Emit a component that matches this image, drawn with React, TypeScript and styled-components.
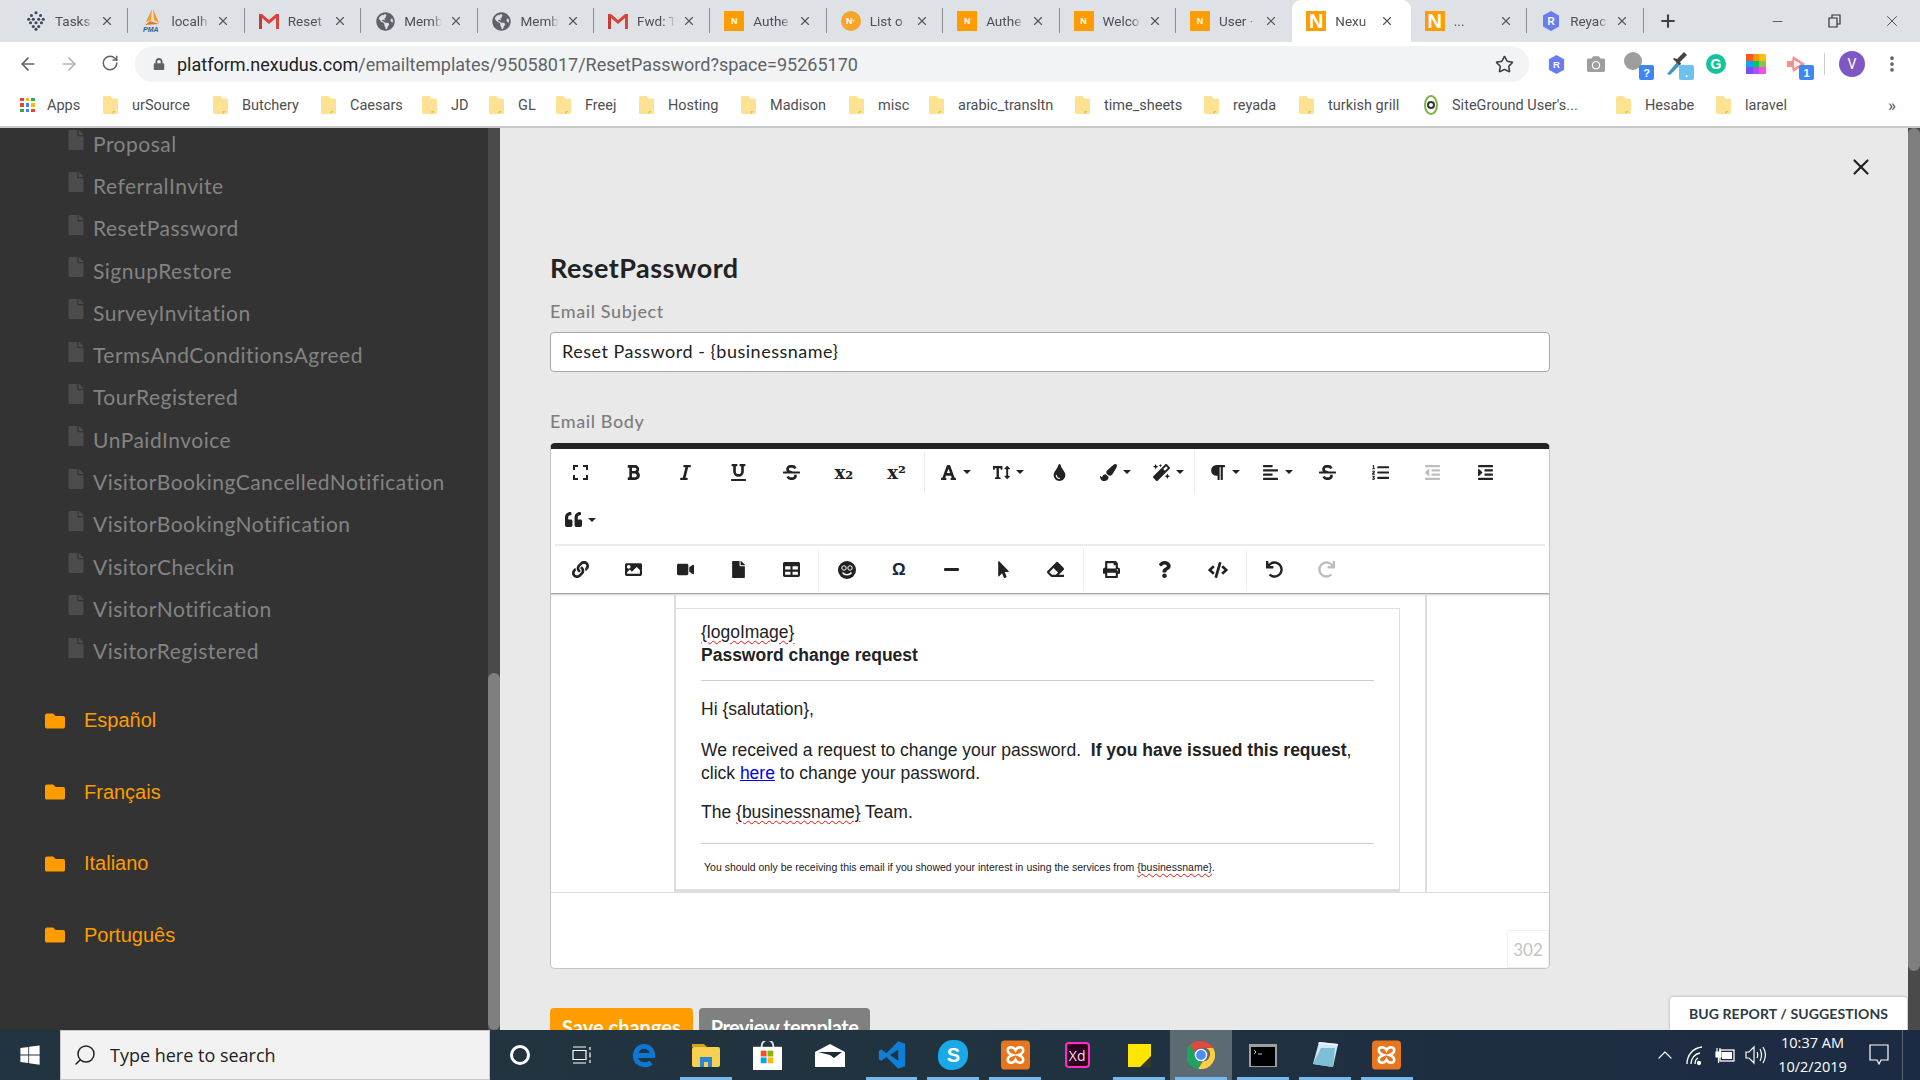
import React from 'react';
import styled, { createGlobalStyle } from 'styled-components';
import { ArrowLeft, ArrowRight, RotateCw, Star, X, Minus, Plus, Search, ChevronUp, MoreVertical } from 'lucide-react';
import {
  FaBold, FaItalic, FaUnderline, FaStrikethrough, FaFont, FaTextHeight, FaTint,
  FaPaintBrush, FaMagic, FaParagraph, FaAlignLeft, FaListOl, FaOutdent, FaIndent, FaQuoteLeft, FaLink, FaImage,
  FaVideo, FaFile, FaTable, FaMinus, FaMousePointer, FaEraser, FaPrint, FaQuestion, FaCode, FaUndo, FaRedo,
  FaLock, FaGlobeAmericas, FaWindows, FaFolder, FaCamera,
} from 'react-icons/fa';

const GlobalStyle = createGlobalStyle`
  html, body {
    margin: 0;
    height: 100%;
    overflow: hidden;
    font-family: "Liberation Sans", Arial, sans-serif;
  }
  * { box-sizing: border-box; }
`;

const Screen = styled.div`
  width: 1920px;
  height: 1080px;
  display: flex;
  flex-direction: column;
  overflow: hidden;
`;

/* browser chrome */
const TabStrip = styled.div`
  height: 42px;
  background: #dee1e6;
  display: flex;
  align-items: stretch;
  padding-left: 12px;
  flex: none;
`;

const Tab = styled.div<{ $active?: boolean; $sep?: boolean }>`
  position: relative;
  width: ${p => (p.$active ? 118.5 : 116.4)}px;
  display: flex;
  align-items: center;
  padding-left: 14px;
  font-family: Roboto, sans-serif;
  font-size: 13.5px;
  color: #4d5054;
  background: ${p => (p.$active ? '#fff' : 'transparent')};
  border-radius: ${p => (p.$active ? '9px 9px 0 0' : '0')};

  &::after {
    content: '';
    position: absolute;
    right: 0;
    top: 8px;
    bottom: 9px;
    width: 1px;
    background: ${p => (p.$sep ? '#8a8d91' : 'transparent')};
  }
`;

const TabIcon = styled.div`
  width: 20px;
  height: 20px;
  flex: none;
  display: flex;
  align-items: center;
  justify-content: center;
`;

const TabTitle = styled.div`
  width: 38px;
  margin-left: 9px;
  white-space: nowrap;
  overflow: hidden;
  -webkit-mask-image: linear-gradient(90deg, #000 75%, transparent);
  mask-image: linear-gradient(90deg, #000 75%, transparent);
`;

const TabClose = styled.div`
  margin-left: 7px;
  display: flex;
  color: #55585c;
`;

const NFav = styled.div<{ $big?: boolean }>`
  width: 20px;
  height: 20px;
  background: #ff9c00;
  color: #fff;
  font-family: "Liberation Sans", sans-serif;
  font-weight: 700;
  font-size: ${p => (p.$big ? 20 : 9)}px;
  display: flex;
  align-items: center;
  justify-content: center;
`;

const NRound = styled(NFav)`
  border-radius: 50%;
  background: #f4a62a;
  font-size: 9px;
`;

const NewTab = styled.div`
  width: 49px;
  display: flex;
  align-items: center;
  justify-content: center;
  color: #3c4043;
`;

const WinControls = styled.div`
  margin-left: auto;
  display: flex;
  align-items: center;
  color: #333;
`;

const WinButton = styled.div`
  width: 57px;
  display: flex;
  justify-content: center;
`;

const AddressRow = styled.div`
  height: 42px;
  padding-top: 2px;
  background: #fff;
  display: flex;
  align-items: center;
  flex: none;
`;

const NavButton = styled.div<{ $muted?: boolean }>`
  width: 41px;
  display: flex;
  justify-content: center;
  color: ${p => (p.$muted ? '#b4b6b9' : '#5f6368')};
`;

const NavGroup = styled.div`
  width: 135px;
  padding-left: 7px;
  display: flex;
`;

const UrlBar = styled.div`
  width: 1394px;
  height: 36px;
  border-radius: 18px;
  background: #f1f3f4;
  display: flex;
  align-items: center;
  padding-left: 18px;
  padding-right: 15px;
  font-family: Roboto, sans-serif;
  font-size: 18px;
  color: #5f6368;
  white-space: nowrap;
`;

const UrlHost = styled.span`
  color: #202124;
  margin-left: 12px;
`;

const UrlStar = styled.div`
  margin-left: auto;
  display: flex;
  color: #3c4043;
`;

const Extensions = styled.div`
  flex: 1;
  display: flex;
  align-items: center;
  padding-left: 7px;
`;

const Ext = styled.div`
  position: relative;
  width: 40px;
  height: 30px;
  display: flex;
  align-items: center;
  justify-content: center;
`;

const ExtBadge = styled.div<{ $light?: boolean }>`
  position: absolute;
  right: 2px;
  bottom: -1px;
  width: 15px;
  height: 15px;
  border-radius: 2px;
  background: ${p => (p.$light ? '#6ec1ec' : '#3d87f5')};
  color: #fff;
  font-family: "Liberation Sans", sans-serif;
  font-weight: 700;
  font-size: 11px;
  display: flex;
  align-items: center;
  justify-content: center;
`;

const GrayBall = styled.div`
  width: 18px;
  height: 18px;
  border-radius: 50%;
  background: #9e9e9e;
  margin: -6px 6px 0 0;
`;

const GrammarlyBall = styled.div`
  width: 20px;
  height: 20px;
  border-radius: 50%;
  background: #15c39a;
  color: #fff;
  font-family: "Liberation Sans", sans-serif;
  font-weight: 700;
  font-size: 14px;
  display: flex;
  align-items: center;
  justify-content: center;
`;

const ToolbarRule = styled.div`
  width: 1px;
  height: 22px;
  background: #c9cacc;
  margin: 0 14px 0 8px;
`;

const Avatar = styled.div`
  width: 26px;
  height: 26px;
  border-radius: 50%;
  background: #7e57c2;
  color: #fff;
  font-family: Roboto, sans-serif;
  font-size: 14px;
  display: flex;
  align-items: center;
  justify-content: center;
`;

const Dots = styled.div`
  margin-left: 17px;
  color: #5f6368;
  display: flex;
`;

const BookmarkRow = styled.div`
  height: 44px;
  background: #fff;
  border-bottom: 2px solid #c7c7c7;
  display: flex;
  align-items: center;
  padding-left: 20px;
  font-family: Roboto, sans-serif;
  font-size: 14.5px;
  color: #4d4f52;
  flex: none;
`;

const Bookmark = styled.div<{ $w: number; $gap?: number }>`
  width: ${p => p.$w}px;
  flex: none;
  display: flex;
  align-items: center;
  gap: ${p => p.$gap ?? 14}px;
  white-space: nowrap;
`;

const More = styled.div`
  margin-left: auto;
  padding-right: 24px;
  font-size: 17px;
`;

const AppsGrid = styled.div`
  width: 15px;
  height: 15px;
  display: grid;
  grid-template-columns: repeat(3, 3.6px);
  grid-auto-rows: 3.6px;
  gap: 2px;
  margin-right: 12px;
`;

const AppDot = styled.div<{ $c: string }>`
  background: ${p => p.$c};
`;

/* page */
const PageRow = styled.div`
  flex: 1;
  min-height: 0;
  display: flex;
`;

const Sidebar = styled.aside`
  width: 488px;
  flex: none;
  background: #333;
  overflow: hidden;
`;

const FileList = styled.div`
  margin-top: -6px;
  padding-left: 68px;
`;

const FileRow = styled.div`
  height: 42.3px;
  display: flex;
  align-items: center;
  gap: 9px;
  font-family: Lato, sans-serif;
  font-size: 21px;
  letter-spacing: 0.5px;
  color: #838383;
  white-space: nowrap;
`;

const FileGlyph = styled(FaFile)`
  color: #4c4c4c;
  width: 16px;
  height: 20px;
  margin-top: -6px;
  flex: none;
`;

const LangList = styled.div`
  margin-top: 13px;
  padding-left: 45px;
`;

const LangRow = styled.div`
  height: 71.6px;
  display: flex;
  align-items: center;
  gap: 19px;
  font-size: 20px;
  color: #ff9c00;
`;

const Scrollbar = styled.div<{ $top: number; $bottom: number }>`
  width: 12px;
  flex: none;
  background: #4a4a4a;
  display: flex;
  flex-direction: column;
  padding-top: ${p => p.$top}px;
  padding-bottom: ${p => p.$bottom}px;
`;

const ScrollThumb = styled.div`
  flex: 1;
  background: #7f7f7f;
  border-radius: 6px;
`;

const Main = styled.main`
  flex: 1;
  position: relative;
  background: #e9e9e9;
  padding: 125px 0 0 50px;
  overflow: hidden;
`;

const CloseMark = styled.div`
  position: absolute;
  top: 26px;
  right: 34px;
  color: #222;
  display: flex;
`;

const Form = styled.div`
  width: 1000px;
`;

const Title = styled.h1`
  margin: 0;
  height: 30px;
  line-height: 30px;
  font-family: Lato, sans-serif;
  font-weight: 700;
  font-size: 27px;
  letter-spacing: 0.45px;
  color: #222;
`;

const Label = styled.div`
  margin-top: 16px;
  height: 24px;
  line-height: 24px;
  font-family: Lato, sans-serif;
  font-size: 18px;
  letter-spacing: 0.6px;
  color: #7d7d7d;
  font-weight: 500;
`;

const SubjectInput = styled.div`
  margin-top: 9px;
  height: 40px;
  background: #fff;
  border: 1px solid #aaa;
  border-radius: 4px;
  padding: 0 11px 3px;
  display: flex;
  align-items: center;
  font-family: Lato, sans-serif;
  font-size: 18px;
  letter-spacing: 0.5px;
  color: #222;
`;

const BodyLabel = styled(Label)`
  margin-top: 37px;
`;

const Editor = styled.div`
  margin-top: 10px;
  height: 526px;
  background: #fff;
  border: 1px solid #c4c4c4;
  border-top: 6px solid #222;
  border-radius: 5px;
  display: flex;
  flex-direction: column;
  overflow: hidden;
`;

const ToolRow = styled.div<{ $h: number }>`
  height: ${p => p.$h}px;
  display: flex;
  align-items: center;
  padding-left: 3px;
  flex: none;
`;

const ToolBtn = styled.div<{ $w?: number; $muted?: boolean }>`
  width: ${p => p.$w ?? 52.7}px;
  flex: none;
  display: flex;
  align-items: center;
  justify-content: center;
  color: ${p => (p.$muted ? '#bdbdbd' : '#222')};
  font-size: 17px;
`;

const DropBtn = styled(ToolBtn)`
  padding-left: 5px;
`;

const Caret = styled.span`
  width: 0;
  height: 0;
  margin-left: 6px;
  border-left: 4px solid transparent;
  border-right: 4px solid transparent;
  border-top: 4px solid #222;
`;

const ToolSep = styled.div`
  width: 1px;
  height: 42px;
  background: #ececec;
  flex: none;
  margin: 0 1px;
`;

const ToolDivider = styled.div`
  height: 2px;
  margin: 0 4px;
  background: #ebebeb;
  flex: none;
`;

const OmegaGlyph = styled.span`
  font-family: "Liberation Sans", sans-serif;
  font-weight: 700;
  font-size: 17px;
  color: #1a2440;
`;

const ScriptGlyph = styled.span`
  font-family: "DejaVu Serif", serif;
  font-weight: 700;
  font-size: 18px;
  color: #222;
`;

const EditorBody = styled.div`
  height: 299px;
  flex: none;
  border-top: 1px solid #a8a8a8;
  box-shadow: inset 0 2px 2px -1px #ccc;
  padding-left: 123px;
  overflow: hidden;
`;

const EmailFrame = styled.div`
  width: 753px;
  height: 100%;
  padding-top: 13px;
  border: solid #ddd;
  border-width: 1px 2px 0 2px;
`;

const EmailCard = styled.div`
  width: 724px;
  height: 100%;
  border: 1px solid #ddd;
  border-left: 0;
  border-bottom: 3px solid #ddd;
  padding: 12px 25px 0 25px;
  font-size: 17.5px;
  line-height: 23px;
  color: #222;
`;

const Squiggle = styled.span`
  text-decoration: underline wavy #e81010 1px;
  text-underline-offset: 2px;
`;

const EmailRule = styled.hr<{ $top: number }>`
  border: 0;
  border-top: 1px solid #ccc;
  margin: ${p => p.$top}px 0 0 0;
`;

const EmailPara = styled.p<{ $top: number }>`
  margin: ${p => p.$top}px 0 0 0;
`;

const EmailLink = styled.a`
  color: #0000ee;
  text-decoration: underline;
`;

const SmallPrint = styled.p`
  margin: 15px 0 0 3px;
  font-size: 10.5px;
  line-height: 16px;
  white-space: nowrap;
`;

const EditorFoot = styled.div`
  flex: 1;
  position: relative;
  border-top: 1px solid #ddd;
`;

const Counter = styled.div`
  position: absolute;
  right: 0;
  bottom: 0;
  width: 42px;
  height: 38px;
  border: 1px solid #eee;
  border-radius: 3px 0 0 0;
  color: #c4c4c4;
  font-family: Lato, sans-serif;
  font-size: 17px;
  display: flex;
  align-items: center;
  justify-content: center;
`;

const Actions = styled.div`
  margin-top: 39px;
  display: flex;
  gap: 6px;
`;

const ActionButton = styled.button<{ $gray?: boolean }>`
  height: 38px;
  padding: 0 12px;
  border: 0;
  border-radius: 4px;
  background: ${p => (p.$gray ? '#808080' : '#ff9c00')};
  color: #fff;
  font-family: Lato, sans-serif;
  font-weight: 700;
  font-size: 20px;
  letter-spacing: ${p => (p.$gray ? '-0.5px' : '0')};
`;

const Feedback = styled.div`
  position: absolute;
  right: 1px;
  bottom: 0;
  width: 237px;
  height: 33px;
  background: #fff;
  border-radius: 3px 3px 0 0;
  box-shadow: 0 0 3px rgba(0, 0, 0, 0.3);
  display: flex;
  align-items: center;
  justify-content: center;
  font-family: Lato, sans-serif;
  font-weight: 700;
  font-size: 14px;
  letter-spacing: 0.1px;
  color: #2d3a45;
`;

/* taskbar */
const Taskbar = styled.footer`
  height: 50px;
  flex: none;
  background: linear-gradient(90deg, #22343f 0%, #21333f 50%, #1c2a44 100%);
  display: flex;
  align-items: stretch;
  color: #fff;
`;

const StartButton = styled.div`
  width: 60px;
  display: flex;
  align-items: center;
  justify-content: center;
  flex: none;
`;

const SearchBox = styled.div`
  width: 430px;
  flex: none;
  background: #f2f2f2;
  border: 1px solid #c8c8c8;
  display: flex;
  align-items: center;
  padding-left: 12px;
  gap: 13px;
  font-family: "Open Sans", sans-serif;
  font-size: 18px;
  color: #222;
`;

const FlippedSearch = styled(Search)`
  transform: scaleX(-1);
`;

const TaskSlot = styled.div<{ $w?: number; $open?: boolean; $active?: boolean }>`
  position: relative;
  width: ${p => p.$w ?? 61.9}px;
  flex: none;
  display: flex;
  align-items: center;
  justify-content: center;
  background: ${p => (p.$active ? '#5b6a73' : 'transparent')};

  &::after {
    content: '';
    position: absolute;
    left: 5px;
    right: 5px;
    bottom: 0;
    height: 3px;
    background: ${p => (p.$open ? '#76b9ed' : 'transparent')};
  }
`;

const CortanaRing = styled.div`
  width: 20px;
  height: 20px;
  border: 3px solid #fff;
  border-radius: 50%;
`;

const SkypeTile = styled.div`
  width: 30px;
  height: 30px;
  border-radius: 50% 42% 50% 42%;
  background: #19a8e8;
  color: #fff;
  font-weight: 700;
  font-size: 20px;
  display: flex;
  align-items: center;
  justify-content: center;
`;

const XdTile = styled.div`
  width: 25px;
  height: 26px;
  border: 2px solid #ff2bc2;
  border-radius: 4px;
  background: #2e001f;
  color: #ffd9f2;
  font-family: "Open Sans", sans-serif;
  font-size: 14px;
  display: flex;
  align-items: center;
  justify-content: center;
`;

const Tray = styled.div`
  margin-left: auto;
  width: 270px;
  display: flex;
  align-items: center;
  flex: none;
`;

const TrayIcon = styled.div<{ $w: number }>`
  width: ${p => p.$w}px;
  flex: none;
  display: flex;
  justify-content: center;
`;

const Clock = styled.div`
  width: 85px;
  flex: none;
  text-align: center;
  font-family: "Open Sans", sans-serif;
  font-size: 14.5px;
  line-height: 24px;
  color: #fff;
`;

const ShowDesktop = styled.div`
  width: 18px;
  height: 100%;
  border-left: 1px solid #5a6676;
`;

const Gmail = () => (
  <svg width="20" height="16" viewBox="0 0 20 16">
    <path d="M0 1h3l7 6 7-6h3v15h-3V5l-7 6-7-6v11H0z" fill="#d9453a" />
    <path d="M3 5v11H0V1z" fill="#c63b32" />
  </svg>
);

const Hive = () => (
  <svg width="22" height="22" viewBox="0 0 22 22" fill="#3a4a5c">
    {[[11, 2], [6, 5], [16, 5], [3, 9], [8, 9], [14, 9], [19, 9], [5, 13], [11, 13], [17, 13], [8, 17], [14, 17], [11, 20]].map(([x, y]) => (
      <circle key={`${x}-${y}`} cx={x} cy={y} r="1.7" />
    ))}
  </svg>
);

const Pma = () => (
  <svg width="20" height="24" viewBox="0 0 20 24">
    <path d="M10 0 4 13l5-2zM11 0l1 11 5 3z" fill="#f39a2b" />
    <path d="M3 16 8 12l3 1 6 2z" fill="#e67a1f" />
    <text x="1" y="23" fontSize="7" fontWeight="700" fontStyle="italic" fill="#2f5f9a" fontFamily="Liberation Sans">PMA</text>
  </svg>
);

const Hex = ({ size = 20 }: { size?: number }) => (
  <svg width={size} height={size} viewBox="0 0 20 20">
    <path d="M10 0 18 4.5v11L10 20 2 15.5v-11z" fill="#6b7bf0" />
    <text x="10" y="14" textAnchor="middle" fontSize="10" fontWeight="700" fill="#fff" fontFamily="Liberation Sans">R</text>
  </svg>
);

const BookmarkFolder = () => (
  <svg width="15" height="18" viewBox="0 0 15 18">
    <path d="M1.5 0h6l2 2.5h4A1.5 1.5 0 0 1 15 4v12.500a1.500 1.500 0 0 1-1.500 1.500h-12A1.500 1.500 0 0 1 0 16.500v-15A1.500 1.500 0 0 1 1.500 0z" fill="#fde293" />
    <path d="M9.500 18v-3h3z" fill="#e6bd4f" />
  </svg>
);

const SiteGroundMark = () => (
  <svg width="14" height="20" viewBox="0 0 14 20">
    <ellipse cx="7" cy="10" rx="6" ry="9" fill="none" stroke="#7cb342" strokeWidth="2" />
    <circle cx="7" cy="10" r="3" fill="none" stroke="#333" strokeWidth="2" />
  </svg>
);

const ExpandCorners = () => (
  <svg width="15" height="15" viewBox="0 0 15 15" fill="none" stroke="#222" strokeWidth="2">
    <path d="M1 5V1h4M10 1h4v4M14 10v4h-4M5 14H1v-4" />
  </svg>
);

const SmileFace = () => (
  <svg width="18" height="18" viewBox="0 0 18 18">
    <circle cx="9" cy="9" r="9" fill="#222" />
    <circle cx="6" cy="7" r="2.200" fill="none" stroke="#fff" strokeWidth="1" />
    <circle cx="12" cy="7" r="2.200" fill="none" stroke="#fff" strokeWidth="1" />
    <path d="M4.500 11.500c2 3 7 3 9 0" fill="none" stroke="#fff" strokeWidth="1.400" />
  </svg>
);

const RestoreMark = () => (
  <svg width="14" height="14" viewBox="0 0 14 14" fill="none" stroke="#333" strokeWidth="1.200">
    <path d="M1 4h8v9H1zM4 4V1h8v9H9" />
  </svg>
);

const EdgeLogo = () => (
  <svg width="26" height="26" viewBox="0 0 24 24" fill="none" stroke="#0b78d6" strokeWidth="4.500">
    <path d="M4 12.500h16c0-5-3.500-8.500-8-8.500s-8 4-8 9 4 8 8.500 8c2.500 0 4.500-.7 6-2" />
  </svg>
);

const ExplorerLogo = () => (
  <svg width="28" height="23" viewBox="0 0 28 23">
    <path d="M0 0h12l3 3H0z" fill="#d6a21e" />
    <rect y="3" width="28" height="20" rx="2" fill="#f7d04f" />
    <rect x="8" y="13" width="12" height="10" fill="#2d83d6" />
    <rect x="12" y="18" width="4" height="5" fill="#f7d04f" />
  </svg>
);

const StoreLogo = () => (
  <svg width="29" height="29" viewBox="0 0 30 30">
    <path d="M9 7V5a6 6 0 0 1 12 0v2" fill="none" stroke="#ddd" strokeWidth="2" />
    <rect y="6" width="30" height="24" fill="#fff" />
    <rect x="8" y="10" width="6" height="6" fill="#f25022" />
    <rect x="15" y="10" width="6" height="6" fill="#7fba00" />
    <rect x="8" y="17" width="6" height="6" fill="#00a4ef" />
    <rect x="15" y="17" width="6" height="6" fill="#ffb900" />
  </svg>
);

const MailLogo = () => (
  <svg width="30" height="23" viewBox="0 0 30 23">
    <path d="M0 8 15 0l15 8v15H0z" fill="#fff" />
    <path d="M3 8h24l-8 6-4-3z" fill="#1c2a33" />
  </svg>
);

const VsCodeLogo = () => (
  <svg width="30" height="30" viewBox="0 0 24 24">
    <path fillRule="evenodd" d="M17 1 7.500 10.500 3.500 7.500 1.500 8.500v7l2 1 4-3L17 23l5.500-2V3zM17 7.500 10.500 12l6.500 4.500z" fill="#0f7fd6" />
  </svg>
);

const XamppLogo = () => (
  <svg width="29" height="30" viewBox="0 0 30 30">
    <rect width="30" height="30" rx="4" fill="#e8761f" />
    <path d="M15 10c-2-4-8-4-8 0 0 2 2 4 5 5-3 1-5 3-5 5 0 4 6 4 8 0 2 4 8 4 8 0 0-2-2-4-5-5 3-1 5-3 5-5 0-4-6-4-8 0z" fill="none" stroke="#fff" strokeWidth="2.600" />
  </svg>
);

const StickyLogo = () => (
  <svg width="23" height="23" viewBox="0 0 23 23">
    <path d="M0 0h23v14l-9 9H0z" fill="#ffe600" />
    <path d="M23 12v11H12z" fill="#3a3a24" />
  </svg>
);

const ChromeLogo = () => (
  <svg width="28" height="28" viewBox="0 0 30 30">
    <path d="M15 0a15 15 0 0 1 13 7.500H15A7.500 7.500 0 0 0 8 12L3 3.800A15 15 0 0 1 15 0z" fill="#dd4b3e" />
    <path d="M3 3.800 8.500 13a7.500 7.500 0 0 0 7 9.500L11.500 29.500A15 15 0 0 1 3 3.800z" fill="#1da462" />
    <path d="M28 7.500A15 15 0 0 1 12 29.700l5-8a7.500 7.500 0 0 0 3.500-14.200z" fill="#ffcd40" />
    <circle cx="15" cy="15" r="6" fill="#4e8df5" stroke="#fff" strokeWidth="1.500" />
  </svg>
);

const ConsoleLogo = () => (
  <svg width="28" height="23" viewBox="0 0 28 23">
    <rect width="28" height="23" fill="#9aa0a4" />
    <rect x="2" y="3" width="24" height="19" fill="#000" />
    <path d="M5 6l2 2-2 2M9 10h4" stroke="#ccc" strokeWidth="1" fill="none" />
  </svg>
);

const NotepadLogo = () => (
  <svg width="28" height="26" viewBox="0 0 28 26">
    <path d="M8 0 27 2 22 25 2 22z" fill="#cfe8f2" />
    <path d="M2 22 10 6l14 0-2 19z" fill="#7dbfd6" />
    <path d="M8 0 27 2v2L7 2z" fill="#eef" />
  </svg>
);

const TaskViewIcon = () => (
  <svg width="20" height="18" viewBox="0 0 20 18" fill="none" stroke="#fff" strokeWidth="1.200">
    <path d="M1 1h13M1 17h13M1 4.500h13v9H1zM18 1v3M18 6.500v5M18 14v3" />
  </svg>
);

const Network = () => (
  <svg width="22" height="22" viewBox="0 0 22 22" fill="none" stroke="#fff" strokeWidth="1.300">
    <path d="M3 20C3 11 9 4 18 3M7 20c0-6 4-10 9-11M11 20c0-3 1-5 3-6" />
    <circle cx="15" cy="19" r="1.500" fill="#fff" />
  </svg>
);

const Battery = () => (
  <svg width="22" height="22" viewBox="0 0 22 22">
    <rect x="6" y="6" width="14" height="11" fill="none" stroke="#fff" strokeWidth="1.300" />
    <rect x="8" y="8" width="10" height="7" fill="#fff" />
    <path d="M2 8h5v5H2zM3 4v4M6 4v4M4.500 13v6" stroke="#fff" strokeWidth="1.200" fill="#fff" />
  </svg>
);

const Volume = () => (
  <svg width="22" height="22" viewBox="0 0 22 22" fill="none" stroke="#fff" strokeWidth="1.200">
    <path d="M2 8h3l5-5v16l-5-5H2zM13 8c1 2 1 4 0 6M16 5c2 4 2 8 0 12M19 3c3 5 3 11 0 16" />
  </svg>
);

const ActionCenter = () => (
  <svg width="20" height="22" viewBox="0 0 20 22" fill="none" stroke="#fff" strokeWidth="1.200">
    <path d="M1 1h18v15h-7l-2 4-2-4H1z" />
  </svg>
);

const ColorGrid = () => (
  <svg width="20" height="20" viewBox="0 0 3 3" shapeRendering="crispEdges">
    {['#ff5722', '#ff9800', '#ffc107', '#03a9f4', '#00c853', '#8bc34a', '#7c4dff', '#b14cff', '#ff4ce0'].map((c, i) => (
      <rect key={c} x={i % 3} y={Math.floor(i / 3)} width="1" height="1" fill={c} />
    ))}
  </svg>
);

const PinkArrow = () => (
  <svg width="22" height="18" viewBox="0 0 22 18">
    <path d="M2 6 7 6 8 1 20 9 8 17 7 12 2 12z" fill="#ff8c8c" />
    <path d="M9 5 16 9 9 13z" fill="#fff" />
  </svg>
);

const Dropper = () => (
  <svg width="26" height="26" viewBox="0 0 26 26">
    <path d="M4 23 15 10l3 3L7 24z" fill="#3f93c6" />
    <path d="M14 8 21 1l3 3-7 7 1 2-2 1-6-6 1-1z" fill="#444" />
  </svg>
);

const tabs = [
  { icon: <Hive />, title: 'Tasks' },
  { icon: <Pma />, title: 'localh' },
  { icon: <Gmail />, title: 'Reset' },
  { icon: <FaGlobeAmericas size={19} color="#5f6368" />, title: 'Memb' },
  { icon: <FaGlobeAmericas size={19} color="#5f6368" />, title: 'Memb' },
  { icon: <Gmail />, title: 'Fwd: T' },
  { icon: <NFav>N</NFav>, title: 'Authe' },
  { icon: <NRound>N·</NRound>, title: 'List o' },
  { icon: <NFav>N</NFav>, title: 'Authe' },
  { icon: <NFav>N</NFav>, title: 'Welco' },
  { icon: <NFav>N</NFav>, title: 'User ·', nosep: true },
  { icon: <NFav $big>N</NFav>, title: 'Nexu', active: true, nosep: true },
  { icon: <NFav $big>N</NFav>, title: '...' },
  { icon: <Hex />, title: 'Reyac' },
];

const bookmarks = [
  { label: 'urSource', w: 110 }, { label: 'Butchery', w: 108 }, { label: 'Caesars', w: 101 }, { label: 'JD', w: 67 },
  { label: 'GL', w: 67 }, { label: 'Freej', w: 83 }, { label: 'Hosting', w: 102 }, { label: 'Madison', w: 108 },
  { label: 'misc', w: 80 }, { label: 'arabic_transltn', w: 146 }, { label: 'time_sheets', w: 129 }, { label: 'reyada', w: 95 },
  { label: 'turkish grill', w: 125 }, { label: "SiteGround User's...", w: 192, site: true }, { label: 'Hesabe', w: 100 }, { label: 'laravel', w: 90 },
];

const appColors = ['#ea4335', '#fbbc05', '#34a853', '#ea4335', '#4285f4', '#fbbc05', '#34a853', '#4285f4', '#ea4335'];

const templates = [
  'Proposal', 'ReferralInvite', 'ResetPassword', 'SignupRestore', 'SurveyInvitation', 'TermsAndConditionsAgreed',
  'TourRegistered', 'UnPaidInvoice', 'VisitorBookingCancelledNotification', 'VisitorBookingNotification',
  'VisitorCheckin', 'VisitorNotification', 'VisitorRegistered',
];

const languages = ['Español', 'Français', 'Italiano', 'Português'];

const App: React.FC = () => {
  return (
    <Screen>
      <GlobalStyle />
      <TabStrip>
        {tabs.map((t, i) => (
          <Tab key={i} $active={t.active} $sep={!t.active && !t.nosep}>
            <TabIcon>{t.icon}</TabIcon>
            <TabTitle>{t.title}</TabTitle>
            <TabClose><X size={14} strokeWidth={2} /></TabClose>
          </Tab>
        ))}
        <NewTab><Plus size={20} strokeWidth={2.5} /></NewTab>
        <WinControls>
          <WinButton><Minus size={15} strokeWidth={1.2} /></WinButton>
          <WinButton><RestoreMark /></WinButton>
          <WinButton><X size={18} strokeWidth={1.1} /></WinButton>
        </WinControls>
      </TabStrip>

      <AddressRow>
        <NavGroup>
          <NavButton><ArrowLeft size={20} /></NavButton>
          <NavButton $muted><ArrowRight size={20} /></NavButton>
          <NavButton><RotateCw size={18} /></NavButton>
        </NavGroup>
        <UrlBar>
          <FaLock size={12} color="#5f6368" />
          <UrlHost>platform.nexudus.com</UrlHost>/emailtemplates/95058017/ResetPassword?space=95265170
          <UrlStar><Star size={19} /></UrlStar>
        </UrlBar>
        <Extensions>
          <Ext><Hex size={19} /></Ext>
          <Ext><FaCamera size={18} color="#9e9e9e" /></Ext>
          <Ext><GrayBall /><ExtBadge>?</ExtBadge></Ext>
          <Ext><Dropper /><ExtBadge $light>.</ExtBadge></Ext>
          <Ext><GrammarlyBall>G</GrammarlyBall></Ext>
          <Ext><ColorGrid /></Ext>
          <Ext><PinkArrow /><ExtBadge>1</ExtBadge></Ext>
          <ToolbarRule />
          <Avatar>V</Avatar>
          <Dots><MoreVertical size={20} strokeWidth={2.5} /></Dots>
        </Extensions>
      </AddressRow>

      <BookmarkRow>
        <Bookmark $w={83} $gap={0}>
          <AppsGrid>{appColors.map((c, i) => <AppDot key={i} $c={c} />)}</AppsGrid>
          Apps
        </Bookmark>
        {bookmarks.map(b => (
          <Bookmark key={b.label} $w={b.w}>
            {b.site ? <SiteGroundMark /> : <BookmarkFolder />}
            {b.label}
          </Bookmark>
        ))}
        <More>»</More>
      </BookmarkRow>

      <PageRow>
        <Sidebar>
          <FileList>
            {templates.map(name => (
              <FileRow key={name}><FileGlyph />{name}</FileRow>
            ))}
          </FileList>
          <LangList>
            {languages.map(lang => (
              <LangRow key={lang}><FaFolder size={20} />{lang}</LangRow>
            ))}
          </LangList>
        </Sidebar>
        <Scrollbar $top={545} $bottom={0}><ScrollThumb /></Scrollbar>

        <Main>
          <CloseMark><X size={26} strokeWidth={2} /></CloseMark>
          <Form>
            <Title>ResetPassword</Title>
            <Label>Email Subject</Label>
            <SubjectInput>Reset Password - {'{businessname}'}</SubjectInput>
            <BodyLabel>Email Body</BodyLabel>
            <Editor>
              <ToolRow $h={46}>
                <ToolBtn><ExpandCorners /></ToolBtn>
                <ToolBtn><FaBold /></ToolBtn>
                <ToolBtn><FaItalic /></ToolBtn>
                <ToolBtn><FaUnderline /></ToolBtn>
                <ToolBtn><FaStrikethrough /></ToolBtn>
                <ToolBtn><ScriptGlyph>x₂</ScriptGlyph></ToolBtn>
                <ToolBtn><ScriptGlyph>x²</ScriptGlyph></ToolBtn>
                <ToolSep />
                <DropBtn $w={53.4}><FaFont /><Caret /></DropBtn>
                <DropBtn $w={53.4}><FaTextHeight /><Caret /></DropBtn>
                <ToolBtn $w={53.4}><FaTint /></ToolBtn>
                <DropBtn $w={53.4}><FaPaintBrush /><Caret /></DropBtn>
                <DropBtn $w={53.4}><FaMagic /><Caret /></DropBtn>
                <ToolSep />
                <DropBtn><FaParagraph /><Caret /></DropBtn>
                <DropBtn><FaAlignLeft /><Caret /></DropBtn>
                <ToolBtn><FaStrikethrough /></ToolBtn>
                <ToolBtn><FaListOl /></ToolBtn>
                <ToolBtn $muted><FaOutdent /></ToolBtn>
                <ToolBtn><FaIndent /></ToolBtn>
              </ToolRow>
              <ToolRow $h={49}>
                <ToolBtn><FaQuoteLeft /><Caret /></ToolBtn>
              </ToolRow>
              <ToolDivider />
              <ToolRow $h={47}>
                <ToolBtn><FaLink /></ToolBtn>
                <ToolBtn><FaImage /></ToolBtn>
                <ToolBtn><FaVideo /></ToolBtn>
                <ToolBtn><FaFile /></ToolBtn>
                <ToolBtn><FaTable /></ToolBtn>
                <ToolSep />
                <ToolBtn $w={52.3}><SmileFace /></ToolBtn>
                <ToolBtn $w={52.3}><OmegaGlyph>Ω</OmegaGlyph></ToolBtn>
                <ToolBtn $w={52.3}><FaMinus /></ToolBtn>
                <ToolBtn $w={52.3}><FaMousePointer /></ToolBtn>
                <ToolBtn $w={52.3}><FaEraser /></ToolBtn>
                <ToolSep />
                <ToolBtn $w={53.3}><FaPrint /></ToolBtn>
                <ToolBtn $w={53.3}><FaQuestion /></ToolBtn>
                <ToolBtn $w={53.3}><FaCode size={20} /></ToolBtn>
                <ToolSep />
                <ToolBtn><FaUndo /></ToolBtn>
                <ToolBtn $muted><FaRedo /></ToolBtn>
              </ToolRow>
              <EditorBody>
                <EmailFrame>
                  <EmailCard>
                    <div><Squiggle>{'{logoImage}'}</Squiggle></div>
                    <div><strong>Password change request</strong></div>
                    <EmailRule $top={13} />
                    <EmailPara $top={16.5}>Hi {'{salutation}'},</EmailPara>
                    <EmailPara $top={18}>
                      We received a request to change your password.&nbsp; <strong>If you have issued this request</strong>,<br />
                      click <EmailLink>here</EmailLink> to change your password.
                    </EmailPara>
                    <EmailPara $top={16.7}>The <Squiggle>{'{businessname}'}</Squiggle> Team.</EmailPara>
                    <EmailRule $top={19} />
                    <SmallPrint>
                      You should only be receiving this email if you showed your interest in using the services from <Squiggle>{'{businessname}'}</Squiggle>.
                    </SmallPrint>
                  </EmailCard>
                </EmailFrame>
              </EditorBody>
              <EditorFoot><Counter>302</Counter></EditorFoot>
            </Editor>
            <Actions>
              <ActionButton>Save changes</ActionButton>
              <ActionButton $gray>Preview template</ActionButton>
            </Actions>
          </Form>
          <Feedback>BUG REPORT / SUGGESTIONS</Feedback>
        </Main>
        <Scrollbar $top={0} $bottom={59}><ScrollThumb /></Scrollbar>
      </PageRow>

      <Taskbar>
        <StartButton><FaWindows size={22} /></StartButton>
        <SearchBox><FlippedSearch size={24} strokeWidth={1.5} />Type here to search</SearchBox>
        <TaskSlot $w={60}><CortanaRing /></TaskSlot>
        <TaskSlot $w={63}><TaskViewIcon /></TaskSlot>
        <TaskSlot><EdgeLogo /></TaskSlot>
        <TaskSlot $open><ExplorerLogo /></TaskSlot>
        <TaskSlot><StoreLogo /></TaskSlot>
        <TaskSlot><MailLogo /></TaskSlot>
        <TaskSlot $open><VsCodeLogo /></TaskSlot>
        <TaskSlot $open><SkypeTile>S</SkypeTile></TaskSlot>
        <TaskSlot $open><XamppLogo /></TaskSlot>
        <TaskSlot><XdTile>Xd</XdTile></TaskSlot>
        <TaskSlot $open><StickyLogo /></TaskSlot>
        <TaskSlot $open $active><ChromeLogo /></TaskSlot>
        <TaskSlot $open><ConsoleLogo /></TaskSlot>
        <TaskSlot $open><NotepadLogo /></TaskSlot>
        <TaskSlot $open><XamppLogo /></TaskSlot>
        <Tray>
          <TrayIcon $w={30}><ChevronUp size={24} strokeWidth={1.2} /></TrayIcon>
          <TrayIcon $w={30}><Network /></TrayIcon>
          <TrayIcon $w={30}><Battery /></TrayIcon>
          <TrayIcon $w={30}><Volume /></TrayIcon>
          <Clock>10:37 AM<br />10/2/2019</Clock>
          <TrayIcon $w={47}><ActionCenter /></TrayIcon>
          <ShowDesktop />
        </Tray>
      </Taskbar>
    </Screen>
  );
};

export default App;
